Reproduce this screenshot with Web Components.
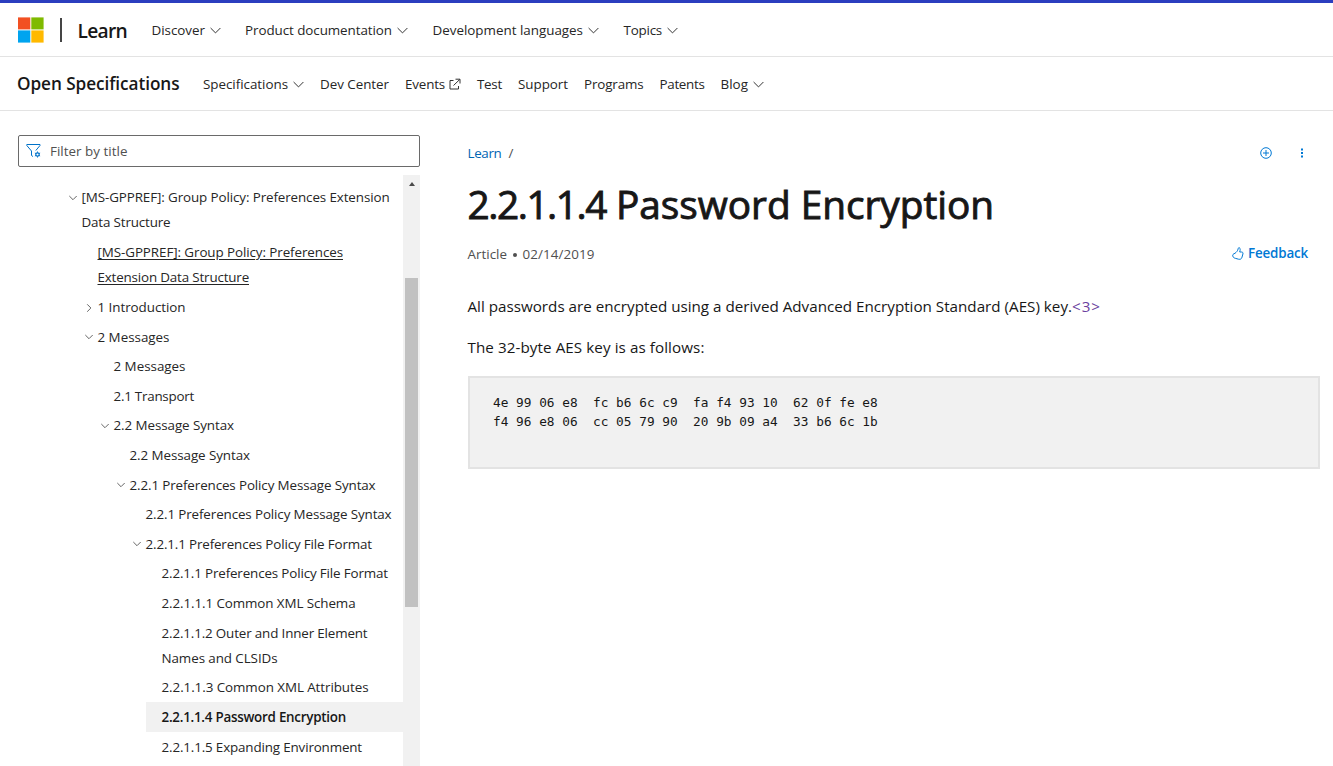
<!DOCTYPE html>
<html lang="en">
<head>
<meta charset="utf-8">
<title>2.2.1.1.4 Password Encryption</title>
<style>
html,body{margin:0;height:100%;overflow:hidden;background:#fff}
body{font:13.4px "Open Sans","Noto Sans",sans-serif;color:#171717}
</style>
</head>
<body>
<docs-page>
  <top-bar slot="header">
    <nav-item icon="down"><fit-text w="53.5">Discover</fit-text></nav-item>
    <nav-item icon="down"><fit-text w="147">Product documentation</fit-text></nav-item>
    <nav-item icon="down"><fit-text w="150.5">Development languages</fit-text></nav-item>
    <nav-item icon="down"><fit-text w="38.5">Topics</fit-text></nav-item>
  </top-bar>
  <sub-bar slot="header">
    <nav-item icon="down"><fit-text w="85">Specifications</fit-text></nav-item>
    <nav-item><fit-text w="69">Dev Center</fit-text></nav-item>
    <nav-item icon="out"><fit-text w="40">Events</fit-text></nav-item>
    <nav-item><fit-text w="25">Test</fit-text></nav-item>
    <nav-item><fit-text w="50">Support</fit-text></nav-item>
    <nav-item><fit-text w="59.5">Programs</fit-text></nav-item>
    <nav-item><fit-text w="45">Patents</fit-text></nav-item>
    <nav-item icon="down"><fit-text w="27.5">Blog</fit-text></nav-item>
  </sub-bar>
  <filter-box slot="side"></filter-box>
  <toc-tree slot="side">
    <toc-item level="0" open><fit-text w="308">[MS-GPPREF]: Group Policy: Preferences Extension</fit-text><fit-text w="89">Data Structure</fit-text></toc-item>
    <toc-item level="1" hovered><fit-text w="245.5">[MS-GPPREF]: Group Policy: Preferences</fit-text><fit-text w="151.5">Extension Data Structure</fit-text></toc-item>
    <toc-item level="1" closed><fit-text w="88">1 Introduction</fit-text></toc-item>
    <toc-item level="1" open><fit-text w="72">2 Messages</fit-text></toc-item>
    <toc-item level="2"><fit-text w="72">2 Messages</fit-text></toc-item>
    <toc-item level="2"><fit-text w="80.5">2.1 Transport</fit-text></toc-item>
    <toc-item level="2" open><fit-text w="120.5">2.2 Message Syntax</fit-text></toc-item>
    <toc-item level="3"><fit-text w="120.5">2.2 Message Syntax</fit-text></toc-item>
    <toc-item level="3" open><fit-text w="246">2.2.1 Preferences Policy Message Syntax</fit-text></toc-item>
    <toc-item level="4"><fit-text w="246">2.2.1 Preferences Policy Message Syntax</fit-text></toc-item>
    <toc-item level="4" open><fit-text w="226.5">2.2.1.1 Preferences Policy File Format</fit-text></toc-item>
    <toc-item level="5"><fit-text w="226.5">2.2.1.1 Preferences Policy File Format</fit-text></toc-item>
    <toc-item level="5"><fit-text w="194">2.2.1.1.1 Common XML Schema</fit-text></toc-item>
    <toc-item level="5"><fit-text w="206">2.2.1.1.2 Outer and Inner Element</fit-text><fit-text w="116">Names and CLSIDs</fit-text></toc-item>
    <toc-item level="5"><fit-text w="207">2.2.1.1.3 Common XML Attributes</fit-text></toc-item>
    <toc-item level="5" selected><fit-text w="184.5">2.2.1.1.4 Password Encryption</fit-text></toc-item>
    <toc-item level="5"><fit-text w="200.5">2.2.1.1.5 Expanding Environment</fit-text></toc-item>
  </toc-tree>
  <doc-article>
    <fit-text slot="title" w="138.5">2.2.1.1.4</fit-text><fit-text slot="title" w="388"> Password Encryption</fit-text>
    <p><fit-text w="604.5">All passwords are encrypted using a derived Advanced Encryption Standard (AES) key.</fit-text><a><fit-text w="29">&lt;3&gt;</fit-text></a></p>
    <p><fit-text w="237">The 32-byte AES key is as follows:</fit-text></p>
    <code-block>4e 99 06 e8  fc b6 6c c9  fa f4 93 10  62 0f fe e8
f4 96 e8 06  cc 05 79 90  20 9b 09 a4  33 b6 6c 1b</code-block>
  </doc-article>
</docs-page>
<script>
const register = (name, html) => customElements.define(name, class extends HTMLElement {
  constructor() {
    super();
    const t = document.createElement('template');
    t.innerHTML = html;
    this.attachShadow({ mode: 'open' }).append(t.content.cloneNode(true));
  }
});

register('docs-page', `<style>
:host{display:flex;flex-direction:column;height:100vh;box-sizing:border-box;border-top:3px solid #2b3ebf}
.body{flex:1;min-height:0;display:flex}
aside{width:402px;margin:24px 47.500px 0 18px;display:flex;flex-direction:column;flex:none}
main{width:852.500px}
</style><slot name="header"></slot><div class="body"><aside><slot name="side"></slot></aside><main><slot></slot></main></div>`);

register('top-bar', `<style>
:host{display:flex;align-items:center;height:53px;border-bottom:1px solid #e3e3e3;padding-left:18px;flex:none}
svg{display:block}
.rule{width:2px;height:24px;background:#454545;margin:0 15.5px 0 16px}
.brand{font-size:19.2px;font-weight:600;line-height:28px;margin-top:2px;width:74px}
nav{display:flex;gap:24px}
nav ::slotted(:nth-child(n+3)){margin-left:.500px}
</style>
<svg width="26" height="26" viewBox="0 0 26 26"><path fill="#f25022" d="M0 .4h12.3v12H0z"/><path fill="#7fba00" d="M13.3.4h12.3v12H13.3z"/><path fill="#00a4ef" d="M0 13.4h12.3v12.2H0z"/><path fill="#ffb900" d="M13.3 13.4h12.3v12.2H13.3z"/></svg>
<div class="rule"></div><div class="brand"><fit-text w="49.5">Learn</fit-text></div><nav><slot></slot></nav>`);

register('sub-bar', `<style>
:host{display:flex;align-items:center;height:53px;border-bottom:1px solid #e3e3e3;padding-left:17px;flex:none}
.title{font-size:17.2px;font-weight:600;line-height:26px;width:186px;margin-top:1px}
nav{display:flex;gap:16px}
</style><div class="title"><fit-text w="162.5">Open Specifications</fit-text></div><nav><slot></slot></nav>`);

register('nav-item', `<style>
:host{display:flex;align-items:center;line-height:20px;color:#262626}
svg{display:none;fill:none;stroke:#333;stroke-width:1}
:host([icon=down]) .down{display:block;margin:1px 0 0 5px}
:host([icon=out]) .out{display:block;margin:0 0 0 4px}
</style><slot></slot>
<svg class="down" width="11" height="7" viewBox="0 0 11 7"><path d="M.6 1l4.9 4.9L10.400 1"/></svg>
<svg class="out" width="12" height="12" viewBox="0 0 12 12"><path d="M4.500 2.500H1v8.500h8.500V8M6.500 1.200H11V5.500M10.700 1.500L4.500 7.500"/></svg>`);

register('filter-box', `<style>
:host{display:flex;align-items:center;height:30px;border:1px solid #6a6a6a;border-radius:2px;padding-left:7px;color:#505050;flex:none}
svg{fill:none;stroke:#0072c9;margin-right:8px}
</style><svg width="16" height="16" viewBox="0 0 16 16"><path d="M7 13.500L5.500 12.500V8L.8 2.500V1.500H14V2.500L9.800 7.500"/><circle cx="11.500" cy="11.500" r="1.700" stroke-width="1.200"/><path d="M11.500 8.500v1.200M11.500 13.300v1.200M8.900 10l1 .6M13.100 12.400l1 .6M14.100 10l-1 .6M9.900 12.400l-1 .6"/></svg><fit-text w="77.500">Filter by title</fit-text>`);

register('toc-tree', `<style>
:host{display:flex;flex:1;min-height:0;margin-top:8px;overflow:hidden}
.list{flex:1;padding-top:7.700px;box-sizing:border-box}
.bar{width:17px;background:#f1f1f1;display:flex;flex-direction:column;align-items:center}
.arrow{margin-top:7px;border:solid transparent;border-width:0 3.500px 4px;border-bottom-color:#4a4a4a}
.thumb{margin-top:92px;width:13px;height:329px;background:#c1c1c1}
</style><div class="list"><slot></slot></div><div class="bar"><div class="arrow"></div><div class="thumb"></div></div>`);

register('toc-item', `<style>
:host{display:flex;line-height:25.200px;padding:2.750px 0 1.650px;color:#262626}
:host([level="0"]){margin-left:48px;padding:2.500px 0 1.900px}
:host([level="1"]){margin-left:64px}:host([level="2"]){margin-left:80px}
:host([level="3"]){margin-left:96px}:host([level="4"]){margin-left:112px}:host([level="5"]){margin-left:128px}
:host([selected]){background:#f1f1f1;font-weight:600;color:#171717}
:host([hovered]){text-decoration:underline;text-underline-offset:2px}
.mark{width:15.500px;flex:none;display:flex;height:25px;align-items:center;box-sizing:border-box;padding-left:2px}
svg{display:none;fill:none;stroke:#666}
:host([open]) .o,:host([closed]) .c{display:block}
.text{display:flex;flex-direction:column;align-items:flex-start}
</style><span class="mark"><svg class="o" width="10" height="10" viewBox="0 0 10 10"><path d="M1.300 3l3.700 3.700L8.700 3"/></svg><svg class="c" width="10" height="10" viewBox="0 0 10 10"><path d="M3.200 1.300l3.700 3.700-3.700 3.700"/></svg></span><span class="text"><slot></slot></span>`);

register('doc-article', `<style>
:host{display:block}
.crumbs{display:flex;align-items:center;height:20px;margin-top:32px;color:#0065b3}
.sep{color:#505050;margin-left:7px}
.acts{margin-left:auto;display:flex;align-items:center;gap:26px;padding-right:14px}
svg{display:block;fill:none;stroke:#0078d4}
.acts svg{margin-top:-1px}
h1{margin:11px 0 0;font-size:38.800px;line-height:60px;font-weight:400;-webkit-text-stroke:.900px #171717;height:60px;color:#171717;display:flex}
.meta{display:flex;align-items:center;height:20px;margin-top:10px;color:#505050}
.dot{width:4px;height:4px;border-radius:50%;background:#505050;margin:1px 6px 0 5.500px}
.fb{margin-left:auto;padding-right:12px;display:flex;align-items:center;color:#0078d4;font-weight:600;gap:4.500px;margin-top:-2px}
.content{padding-top:29px;font-size:15.200px;line-height:26px}
::slotted(p){margin:0 0 15px;height:26px;display:flex}
</style>
<div class="crumbs"><fit-text w="34">Learn</fit-text><span class="sep">/</span>
<div class="acts"><svg width="12" height="12" viewBox="0 0 12 12"><circle cx="6" cy="6" r="5.300"/><path d="M6 3v6M3 6h6"/></svg>
<svg width="8" height="12" viewBox="0 0 8 12"><path fill="#0078d4" stroke="none" d="M3 1.500h2v2H3zM3 5h2v2H3zM3 8.500h2v2H3z"/></svg></div></div>
<h1><slot name="title"></slot></h1>
<div class="meta"><fit-text w="39.500">Article</fit-text><span class="dot"></span><fit-text w="72">02/14/2019</fit-text>
<div class="fb"><svg width="12" height="13" viewBox="0 0 12 13"><path d="M7.300.700C6.500.500 6.300 1 6.100 2 5.700 3.800 4.500 5.200 3 6.300 1 7 .4 7.800.8 9 1.200 10.500 2 11 3.300 11.300L6.500 12.200C8.500 12.600 9.500 12 10 10.200L10.900 7C11.200 5.700 10.700 5 9.500 5H7.700C8.200 3.200 8.600 1.200 7.300.700Z"/></svg><fit-text w="60">Feedback</fit-text></div></div>
<div class="content"><slot></slot></div>`);

register('code-block', `<style>
:host{display:block;box-sizing:border-box;height:93px;margin:16px 0 0 .500px;border:2px solid #e3e3e3;background:#f1f1f1;padding:15px 23px;font:12.790px/19px "DejaVu Sans Mono","Liberation Mono",monospace;white-space:pre;color:#171717}
</style><slot></slot>`);

/* Single line of text whose tracking is set so that it fills the width given in "w". */
customElements.define('fit-text', class extends HTMLElement {
  constructor() {
    super();
    this.attachShadow({ mode: 'open' }).innerHTML = '<style>:host{display:inline-block;white-space:pre}</style><slot></slot>';
  }
  connectedCallback() {
    const width = parseFloat(this.getAttribute('w'));
    const natural = this.getBoundingClientRect().width;
    this.style.letterSpacing = (width - natural) / this.textContent.length + 'px';
  }
});
document.querySelectorAll('p a').forEach(a => a.style.color = '#6b3fa0');
</script>
</body>
</html>
